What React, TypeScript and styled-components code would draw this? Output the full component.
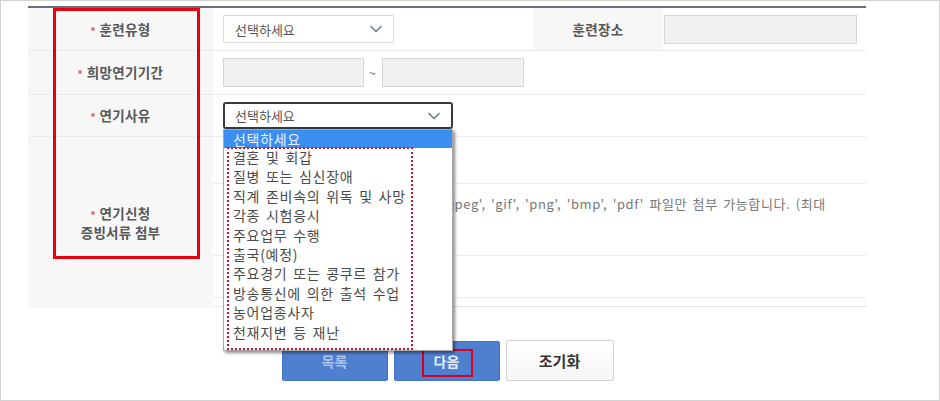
import React, { FC } from 'react'
import styled, { createGlobalStyle } from 'styled-components'
import { ChevronDown } from 'lucide-react'

const GlobalStyle = createGlobalStyle`
  html, body {
    margin: 0;
    padding: 0;
    background: #fff;
  }
  * {
    box-sizing: border-box;
  }
  body {
    font-family: "Noto Sans CJK KR", "Noto Sans", sans-serif;
    color: #444;
  }
`

const REASONS = [
  '결혼 및 회갑',
  '질병 또는 심신장애',
  '직계 존비속의 위독 및 사망',
  '각종 시험응시',
  '주요업무 수행',
  '출국(예정)',
  '주요경기 또는 콩쿠르 참가',
  '방송통신에 의한 출석 수업',
  '농어업종사자',
  '천재지변 등 재난',
]

const Frame = styled.div`
  position: relative;
  width: 940px;
  height: 401px;
  border: 1px solid #d2d2d2;
  padding: 5px 0 0 27px;
  overflow: hidden;
`

const FormTable = styled.div`
  width: 838px;
  border-top: 2px solid #6a717a;
  border-bottom: 1px solid #e4e4e4;
`

const Row = styled.div<{ $h: number }>`
  display: grid;
  grid-template-columns: 185px 1fr;
  height: ${p => p.$h}px;
  border-bottom: 1px solid #ebebeb;
  &:last-child {
    border-bottom: none;
  }
`

const TopRow = styled(Row)`
  grid-template-columns: 185px 320px 130px 1fr;
`

const LabelCell = styled.div`
  background: #f7f7f7;
  display: flex;
  flex-direction: column;
  align-items: center;
  justify-content: center;
  font-size: 13.5px;
  letter-spacing: 0.3px;
  font-weight: 700;
  color: #585858;
  line-height: 19px;
  text-align: center;
`

const Req = styled.span`
  display: inline-block;
  width: 4px;
  height: 4px;
  border-radius: 50%;
  background: #d58080;
  margin-right: 5px;
  vertical-align: 4px;
`

const Cell = styled.div`
  display: flex;
  align-items: center;
  padding-left: 10px;
  position: relative;
`

const SelectBox = styled.div<{ $w: number; $focus?: boolean }>`
  position: relative;
  width: ${p => p.$w}px;
  height: ${p => (p.$focus ? 27 : 28)}px;
  border: ${p => (p.$focus ? '2px solid #3a3a3a' : '1px solid #dcdcdc')};
  border-radius: ${p => (p.$focus ? 3 : 1)}px;
  background: #fff;
  display: flex;
  align-items: center;
  justify-content: space-between;
  padding: 0 7px 0 ${p => (p.$focus ? 10 : 11)}px;
  font-size: 13px;
  color: #555;
  svg {
    color: #6f7f8f;
  }
`

const TextInput = styled.div<{ $w: number }>`
  width: ${p => p.$w}px;
  height: 29px;
  background: #f1f1f1;
  border: 1px solid #d6d6d6;
`

const Tilde = styled.span`
  font-size: 12px;
  color: #666;
  margin: 0 6px 0 5px;
`

const DropList = styled.div`
  position: absolute;
  left: -2px;
  top: calc(100% + 2px);
  width: 230px;
  background: #fff;
  border: 1px solid #a9a9a9;
  box-shadow: 2px 2px 3px rgba(0, 0, 0, 0.45);
  padding-bottom: 8px;
  z-index: 5;
`

const Option = styled.div<{ $active?: boolean }>`
  height: ${p => (p.$active ? 18 : 19.4)}px;
  line-height: ${p => (p.$active ? 18 : 19.4)}px;
  padding-left: 9px;
  font-size: 14px;
  letter-spacing: 0.7px;
  word-spacing: 2px;
  white-space: nowrap;
  color: ${p => (p.$active ? '#e6f0ff' : '#4a4a4a')};
  background: ${p => (p.$active ? '#3b8ff0' : 'transparent')};
`

const DottedMark = styled.div`
  position: absolute;
  left: 3px;
  top: 17px;
  width: 186px;
  bottom: 0;
  border: 2px dotted #c4122e;
  pointer-events: none;
`

const SubRows = styled.div`
  display: flex;
  flex-direction: column;
`

const SubRow = styled.div<{ $h: number }>`
  height: ${p => p.$h}px;
  border-bottom: 1px solid #ebebeb;
  padding: 10px 0 0 10px;
  font-size: 13px;
  letter-spacing: 0.6px;
  word-spacing: 2px;
  color: #777;
  white-space: nowrap;
  &:last-child {
    border-bottom: none;
  }
`

const RedBox = styled.div`
  position: absolute;
  left: 52px;
  top: 7px;
  width: 147px;
  height: 251px;
  border: 3px solid #e8000d;
  pointer-events: none;
`

const ButtonBar = styled.div`
  width: 838px;
  display: flex;
  justify-content: center;
  gap: 6px;
  margin-top: 34px;
  padding-left: 1px;
`

const BlueButton = styled.div<{ $fg: string }>`
  position: relative;
  width: 106px;
  height: 40px;
  background: #4f80d0;
  border: 1px solid #4373c2;
  border-radius: 2px;
  display: flex;
  align-items: center;
  justify-content: center;
  font-size: 14px;
  font-weight: 700;
  color: ${p => p.$fg};
`

const WhiteButton = styled.div`
  width: 108px;
  height: 41px;
  margin-top: -1px;
  background: linear-gradient(#ffffff, #f5f5f5);
  border: 1px solid #d3d3d3;
  border-radius: 2px;
  display: flex;
  align-items: center;
  justify-content: center;
  font-size: 15px;
  font-weight: 700;
  color: #333;
`

const TextMark = styled.div`
  position: absolute;
  left: 27px;
  top: 7px;
  width: 51px;
  height: 28px;
  border: 2px solid #d8001c;
`

const App: FC = () => {
  return (
    <>
      <GlobalStyle />
      <Frame>
        <FormTable>
          <TopRow $h={43}>
            <LabelCell>
              <div><Req />훈련유형</div>
            </LabelCell>
            <Cell>
              <SelectBox $w={171}>
                선택하세요
                <ChevronDown size={20} strokeWidth={2} />
              </SelectBox>
            </Cell>
            <LabelCell>훈련장소</LabelCell>
            <Cell style={{ paddingLeft: 1 }}>
              <TextInput $w={193} />
            </Cell>
          </TopRow>
          <Row $h={44}>
            <LabelCell>
              <div><Req />희망연기기간</div>
            </LabelCell>
            <Cell>
              <TextInput $w={141} />
              <Tilde>~</Tilde>
              <TextInput $w={142} />
            </Cell>
          </Row>
          <Row $h={42}>
            <LabelCell>
              <div><Req />연기사유</div>
            </LabelCell>
            <Cell>
              <SelectBox $w={230} $focus>
                선택하세요
                <ChevronDown size={20} strokeWidth={2} />
                <DropList>
                  <Option $active>선택하세요</Option>
                  {REASONS.map(r => (
                    <Option key={r}>{r}</Option>
                  ))}
                  <DottedMark />
                </DropList>
              </SelectBox>
            </Cell>
          </Row>
          <Row $h={169}>
            <LabelCell>
              <div><Req />연기신청</div>
              <div>증빙서류 첨부</div>
            </LabelCell>
            <SubRows>
              <SubRow $h={47} />
              <SubRow $h={72}>
                ※ 'hwp', 'doc', 'docx', 'xls', 'jpg', 'jpeg', 'gif', 'png', 'bmp', 'pdf' 파일만 첨부 가능합니다. (최대
              </SubRow>
              <SubRow $h={42} />
              <SubRow $h={7} />
            </SubRows>
          </Row>
        </FormTable>
        <ButtonBar>
          <BlueButton $fg="#a9c3ec">목록</BlueButton>
          <BlueButton $fg="#e3ecfa">
            다음
            <TextMark />
          </BlueButton>
          <WhiteButton>조기화</WhiteButton>
        </ButtonBar>
        <RedBox />
      </Frame>
    </>
  )
}

export default App
